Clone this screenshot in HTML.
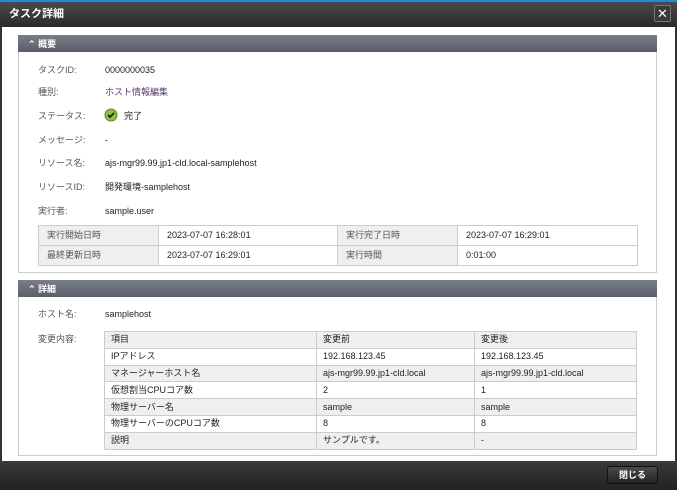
<!DOCTYPE html><html><head><meta charset="utf-8"><style>
*{margin:0;padding:0;box-sizing:border-box}
body{width:677px;height:490px;overflow:hidden;font-family:"Liberation Sans","Noto Sans CJK JP",sans-serif;font-size:9px;line-height:12px;color:#333;background:#fff;position:relative}
.abs{position:absolute}
.title{left:0;top:0;width:677px;height:27px;background:linear-gradient(#4a4a4a,#2a2a2a);border-top:2px solid #1a8fd8}
.title span{position:absolute;left:9px;top:5px;color:#fff;font-weight:bold;font-size:11px;line-height:14px}
.x{right:6px;top:5px;width:17px;height:17px;border:1px solid #777;background:#3a3a3a;color:#fff;font-size:13px;line-height:15px;text-align:center;border-radius:2px}
.side{top:27px;width:2px;height:435px;background:#333}
.foot{left:0;top:461px;width:677px;height:29px;background:linear-gradient(#3a3a3a,#222)}
.btn{left:607px;top:466px;width:51px;height:18px;border:1px solid #111;border-radius:3px;background:linear-gradient(#4a4a4a,#222);color:#fff;font-size:9px;text-align:center;line-height:16px;font-weight:bold}
.sec{border:1px solid #ccc;left:18px;width:639px}
.hdr{left:18px;width:639px;height:17px;background:linear-gradient(#7a7e88,#5a5e68);color:#fff;font-size:9px;font-weight:bold;padding:3px 0 0 10px}
.l{left:38px;color:#555}.v{left:105px;color:#222}
table{position:absolute;border-collapse:collapse;font-size:9px;line-height:11px}
td{border:1px solid #ccc;padding:0 8px;height:20px;color:#222}
td.g{background:#efefef;color:#555}
.t2 tr{height:16.8px}
.t2 td{height:auto;padding:0 6px}
.t2 tr.g td{background:#efefef}
</style></head><body>
<div class="abs title"><span>タスク詳細</span></div>
<div class="abs x">✕</div>
<div class="abs side" style="left:0"></div><div class="abs side" style="right:0"></div>
<div class="abs sec" style="top:35px;height:238px"></div>
<div class="abs hdr" style="top:35px">⌃ 概要</div>
<div class="abs l" style="top:64px">タスクID:</div><div class="abs v" style="top:64px">0000000035</div>
<div class="abs l" style="top:86px">種別:</div><div class="abs v" style="top:86px;color:#5a3a6a">ホスト情報編集</div>
<div class="abs l" style="top:110px">ステータス:</div>
<svg class="abs" style="left:104px;top:108px" width="14" height="14"><circle cx="7" cy="7" r="6" fill="#8bc34a" stroke="#5a8a20"/><path d="M4 7l2 2 4-4" stroke="#222" stroke-width="1.8" fill="none"/></svg>
<div class="abs v" style="top:110px;left:124px">完了</div>
<div class="abs l" style="top:134px">メッセージ:</div><div class="abs v" style="top:134px">-</div>
<div class="abs l" style="top:157px">リソース名:</div><div class="abs v" style="top:157px">ajs-mgr99.99.jp1-cld.local-samplehost</div>
<div class="abs l" style="top:181px">リソースID:</div><div class="abs v" style="top:181px">開発環境-samplehost</div>
<div class="abs l" style="top:205px">実行者:</div><div class="abs v" style="top:205px">sample.user</div>
<table style="left:38px;top:225px;width:600px"><tr><td class="g" style="width:120px">実行開始日時</td><td style="width:179px">2023-07-07 16:28:01</td><td class="g" style="width:120px">実行完了日時</td><td>2023-07-07 16:29:01</td></tr>
<tr><td class="g">最終更新日時</td><td>2023-07-07 16:29:01</td><td class="g">実行時間</td><td>0:01:00</td></tr></table>
<div class="abs sec" style="top:280px;height:176px"></div>
<div class="abs hdr" style="top:280px">⌃ 詳細</div>
<div class="abs l" style="top:308px">ホスト名:</div><div class="abs v" style="top:308px">samplehost</div>
<div class="abs l" style="top:333px">変更内容:</div>
<table class="t2" style="left:104px;top:331px;width:533px">
<tr class="g"><td style="width:212px">項目</td><td style="width:158px">変更前</td><td>変更後</td></tr>
<tr><td>IPアドレス</td><td>192.168.123.45</td><td>192.168.123.45</td></tr>
<tr class="g"><td>マネージャーホスト名</td><td>ajs-mgr99.99.jp1-cld.local</td><td>ajs-mgr99.99.jp1-cld.local</td></tr>
<tr><td>仮想割当CPUコア数</td><td>2</td><td>1</td></tr>
<tr class="g"><td>物理サーバー名</td><td>sample</td><td>sample</td></tr>
<tr><td>物理サーバーのCPUコア数</td><td>8</td><td>8</td></tr>
<tr class="g"><td>説明</td><td>サンプルです。</td><td>-</td></tr>
</table>
<div class="abs foot"></div>
<div class="abs btn">閉じる</div>
</body></html>
